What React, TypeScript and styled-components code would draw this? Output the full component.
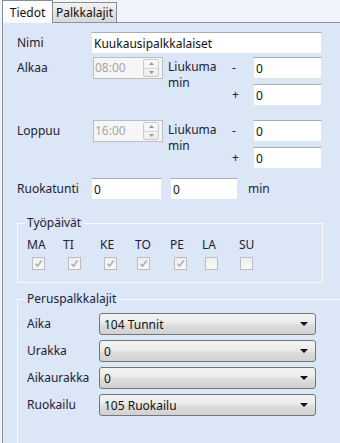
import styled, { createGlobalStyle } from "styled-components"

const GlobalStyle = createGlobalStyle`
  html, body {
    margin: 0;
    padding: 0;
    overflow: hidden;
    background: #f1f5fb;
  }
  body {
    font-family: "Noto Sans", "Open Sans", sans-serif;
    font-size: 12px;
    color: #1e2236;
  }
`

const Window = styled.div`
  width: 340px;
  height: 443px;
  padding-left: 2px;
  box-sizing: border-box;
  display: flex;
  flex-direction: column;
`

const TabStrip = styled.div`
  display: flex;
  align-items: flex-end;
  height: 24px;
  position: relative;
  z-index: 1;
`

const Tab = styled.div<{ $active?: boolean }>`
  box-sizing: border-box;
  display: flex;
  align-items: center;
  justify-content: center;
  border: 1px solid #898c95;
  border-bottom: none;
  color: #111;
  ${(p) =>
    p.$active
      ? `
    width: 51px;
    height: 23px;
    margin-bottom: -1px;
    background: linear-gradient(#ffffff, #f7f9fc);
    position: relative;
    z-index: 2;
  `
      : `
    width: 65px;
    height: 20px;
    margin-left: -1px;
    background: linear-gradient(#f3f3f3, #e3e3e3 50%, #d9d9d9);
  `}
`

const Panel = styled.div`
  flex: 1;
  border-left: 1px solid #8e9199;
  border-top: 1px solid #8e9199;
  background: #dbe6f6;
  padding: 9px 0 0 14px;
`

const Row = styled.div<{ $top?: number }>`
  display: flex;
  align-items: center;
  height: 22px;
  margin-top: ${(p) => p.$top ?? 0}px;
`

const Label = styled.div<{ $w: number; $ml?: number }>`
  width: ${(p) => p.$w}px;
  margin-left: ${(p) => p.$ml ?? 0}px;
  flex: none;
  line-height: 14px;
`

const TextBox = styled.input<{ $w: number; $ml?: number }>`
  box-sizing: border-box;
  width: ${(p) => p.$w}px;
  height: 22px;
  margin: 0 0 0 ${(p) => p.$ml ?? 0}px;
  padding: 0 0 0 2px;
  border: 1px solid #dfe5ec;
  border-top-color: #abadb3;
  background: #fff;
  font: inherit;
  color: #111;
  outline: none;
`

const TimeBlock = styled.div<{ $top: number }>`
  display: grid;
  grid-template-columns: 76px 70px 69px 21px 69px;
  grid-template-rows: 22px 22px;
  row-gap: 5px;
  align-items: center;
  margin-top: ${(p) => p.$top}px;
`

const Cell = styled.div<{ $col: number; $row: number }>`
  grid-column: ${(p) => p.$col};
  grid-row: ${(p) => p.$row};
  display: flex;
  align-items: center;
  line-height: 14px;
`

const Slide = styled.div`
  grid-column: 3;
  grid-row: 1 / span 2;
  align-self: start;
  padding: 2px 0 0 5px;
  line-height: 16px;
`

const TimeBox = styled.div`
  box-sizing: border-box;
  width: 70px;
  height: 22px;
  display: flex;
  align-items: center;
  padding-left: 1px;
  border: 1px solid #bbbfc5;
  background: #f6f6f6;
  color: #a7a7a7;
`

const Spinner = styled.div`
  margin-left: auto;
  margin-right: 3px;
  width: 16px;
  height: 18px;
  box-sizing: border-box;
  display: flex;
  flex-direction: column;
  border: 1px solid #cbcbcb;
  border-radius: 2px;
  background: linear-gradient(#fafafa, #ececec);
`

const SpinHalf = styled.div<{ $down?: boolean }>`
  flex: 1;
  display: flex;
  align-items: center;
  justify-content: center;
  border-top: ${(p) => (p.$down ? "1px solid #d6d6d6" : "none")};
`

const Group = styled.fieldset<{ $w: number; $top: number; $pad: string }>`
  box-sizing: border-box;
  width: ${(p) => p.$w}px;
  margin: ${(p) => p.$top}px 0 0 0;
  padding: ${(p) => p.$pad};
  border: 1px solid #f7faff;
`

const Legend = styled.legend`
  padding: 0 2px;
  margin-left: -2px;
  line-height: 14px;
  color: #1e2236;
`

const Days = styled.div`
  display: flex;
`

const Day = styled.div<{ $w: number }>`
  width: ${(p) => p.$w}px;
  flex: none;
  display: flex;
  flex-direction: column;
`

const DayName = styled.div`
  line-height: 14px;
`

const Check = styled.div<{ $ml: number }>`
  box-sizing: border-box;
  width: 13px;
  height: 13px;
  margin: 5px 0 0 ${(p) => p.$ml}px;
  border: 1px solid #bdbdbd;
  background: linear-gradient(#eeeeee, #f8f8f8);
  display: flex;
  align-items: center;
  justify-content: center;
`

const Combos = styled.div`
  display: flex;
  flex-direction: column;
  gap: 5px;
`

const Combo = styled.div`
  box-sizing: border-box;
  width: 217px;
  height: 22px;
  display: flex;
  align-items: center;
  padding: 0 7px 0 4px;
  border: 1px solid #757575;
  border-radius: 3px;
  background: linear-gradient(#f3f3f3, #ebebeb 45%, #dddddd 55%, #d1d1d1);
  color: #111;
`

const ComboText = styled.span`
  flex: 1;
`

const days = [
  { d: "MA", w: 36, ml: 5, on: true },
  { d: "TI", w: 37, ml: 5, on: true },
  { d: "KE", w: 35, ml: 4, on: true },
  { d: "TO", w: 35, ml: 2, on: true },
  { d: "PE", w: 32, ml: 4, on: true },
  { d: "LA", w: 37, ml: 3, on: false },
  { d: "SU", w: 30, ml: 1, on: false },
]

const combos = [
  { label: "Aika", value: "104 Tunnit" },
  { label: "Urakka", value: "0" },
  { label: "Aikaurakka", value: "0" },
  { label: "Ruokailu", value: "105 Ruokailu" },
]

const Arrow = ({ up }: { up?: boolean }) => (
  <svg width="5" height="3" viewBox="0 0 5 3">
    <path d={up ? "M0 3 L2.5 0 L5 3 Z" : "M0 0 L5 0 L2.5 3 Z"} fill="#9a9a9a" />
  </svg>
)

const TimePicker = ({ value }: { value: string }) => (
  <TimeBox>
    {value}
    <Spinner>
      <SpinHalf>
        <Arrow up />
      </SpinHalf>
      <SpinHalf $down>
        <Arrow />
      </SpinHalf>
    </Spinner>
  </TimeBox>
)

const TimeRange = ({ label, value, top }: { label: string; value: string; top: number }) => (
  <TimeBlock $top={top}>
    <Cell $col={1} $row={1}>{label}</Cell>
    <Cell $col={2} $row={1}>
      <TimePicker value={value} />
    </Cell>
    <Slide>
      Liukuma
      <br />
      min
    </Slide>
    <Cell $col={4} $row={1}>-</Cell>
    <Cell $col={5} $row={1}>
      <TextBox $w={69} readOnly defaultValue="0" />
    </Cell>
    <Cell $col={4} $row={2}>+</Cell>
    <Cell $col={5} $row={2}>
      <TextBox $w={69} readOnly defaultValue="0" />
    </Cell>
  </TimeBlock>
)

export default function App() {
  return (
    <>
      <GlobalStyle />
      <Window>
        <TabStrip>
          <Tab $active>Tiedot</Tab>
          <Tab>Palkkalajit</Tab>
        </TabStrip>
        <Panel>
          <Row>
            <Label $w={74}>Nimi</Label>
            <TextBox $w={231} readOnly defaultValue="Kuukausipalkkalaiset" />
          </Row>
          <TimeRange label="Alkaa" value="08:00" top={3} />
          <TimeRange label="Loppuu" value="16:00" top={14} />
          <Row $top={9}>
            <Label $w={74}>Ruokatunti</Label>
            <TextBox $w={71} readOnly defaultValue="0" />
            <TextBox $w={68} $ml={8} readOnly defaultValue="0" />
            <Label $w={40} $ml={10}>min</Label>
          </Row>
          <Group $w={306} $top={16} $pad="8px 0 12px 9px">
            <Legend>Työpäivät</Legend>
            <Days>
              {days.map((x) => (
                <Day key={x.d} $w={x.w}>
                  <DayName>{x.d}</DayName>
                  <Check $ml={x.ml}>
                    {x.on && (
                      <svg width="9" height="9" viewBox="0 0 9 9">
                        <path d="M1.5 4.8 L3.6 7.2 L7.6 1.5" fill="none" stroke="#a9a9a9" strokeWidth="1.4" />
                      </svg>
                    )}
                  </Check>
                </Day>
              ))}
            </Days>
          </Group>
          <Group $w={340} $top={9} $pad="7px 0 40px 9px">
            <Legend>Peruspalkkalajit</Legend>
            <Combos>
              {combos.map((c) => (
                <Row key={c.label}>
                  <Label $w={72}>{c.label}</Label>
                  <Combo>
                    <ComboText>{c.value}</ComboText>
                    <svg width="8" height="4" viewBox="0 0 8 4">
                      <path d="M0 0 L8 0 L4 4 Z" fill="#111" />
                    </svg>
                  </Combo>
                </Row>
              ))}
            </Combos>
          </Group>
        </Panel>
      </Window>
    </>
  )
}
